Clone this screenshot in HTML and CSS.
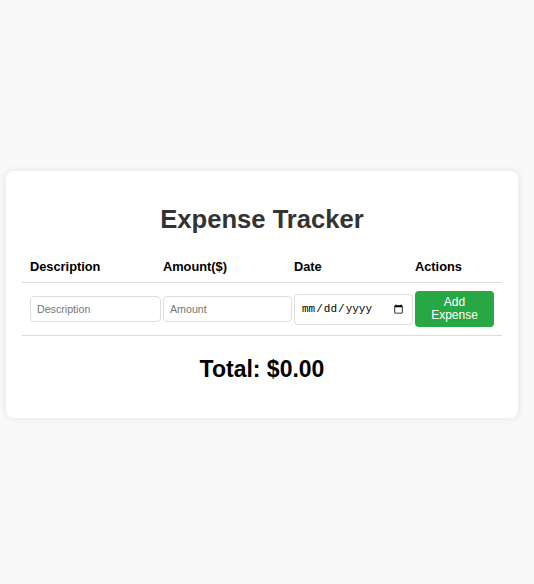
FILE: index.html
```html
<!DOCTYPE html>
<html>
<head>
<meta charset="utf-8">
<link rel="stylesheet" href="styles.css">
</head>
<body>
<div class="card">
  <h1 class="title">Expense Tracker</h1>
  <table class="table">
    <colgroup>
      <col class="c1"><col class="c2"><col class="c3"><col class="c4">
    </colgroup>
    <thead>
      <tr>
        <th>Description</th>
        <th>Amount($)</th>
        <th>Date</th>
        <th>Actions</th>
      </tr>
    </thead>
    <tbody>
      <tr>
        <td><input class="field" type="text" placeholder="Description"></td>
        <td><input class="field" type="number" placeholder="Amount"></td>
        <td><input class="field date" type="date"></td>
        <td><button class="btn">Add Expense</button></td>
      </tr>
    </tbody>
  </table>
  <h2 class="total">Total: $0.00</h2>
</div>
</body>
</html>
```
FILE: styles.css
```css
html, body {
  margin: 0;
  padding: 0;
}
body {
  background: #f9f9f9;
  font-family: "Liberation Sans", Arial, sans-serif;
  padding-top: 171px;
  min-height: 584px;
  box-sizing: border-box;
}
.card {
  margin-left: 6px;
  width: 512px;
  box-sizing: border-box;
  padding: 16px;
  background: #fff;
  border-radius: 8px;
  box-shadow: 0 0 8px rgba(0, 0, 0, 0.1);
}
.title {
  font-size: 25.6px;
  color: #333;
  text-align: center;
  margin: 18px 0 17px;
}
.table {
  width: 100%;
  border-collapse: collapse;
  table-layout: fixed;
}
.c1 { width: 133px; }
.c2 { width: 131px; }
.c3 { width: 121px; }
.c4 { width: 95px; }
.table th,
.table td {
  padding: 8px;
  text-align: left;
  border-bottom: 1px solid #ddd;
  vertical-align: middle;
}
.table th {
  font-size: 12.8px;
  font-weight: bold;
  color: #000;
}
.field {
  width: 100%;
  padding: 6px;
  border: 1px solid #ddd;
  border-radius: 4px;
  font-family: "Liberation Sans", Arial, sans-serif;
  font-size: 10.67px;
  color: #000;
  background: #fff;
  margin: 0;
}
.field::placeholder {
  color: #757575;
}
.date {
  font-family: "Liberation Mono", monospace;
  font-size: 11px;
  padding: 7px 6px;
}
.btn {
  width: 100%;
  box-sizing: border-box;
  padding: 5px 8px;
  background: #28a745;
  color: #fff;
  border: none;
  border-radius: 4px;
  font-family: "Liberation Sans", Arial, sans-serif;
  font-size: 12px;
  line-height: 13px;
  margin: 0;
}
.total {
  font-size: 23px;
  color: #000;
  text-align: center;
  margin: 20px 0 19px;
}
```
